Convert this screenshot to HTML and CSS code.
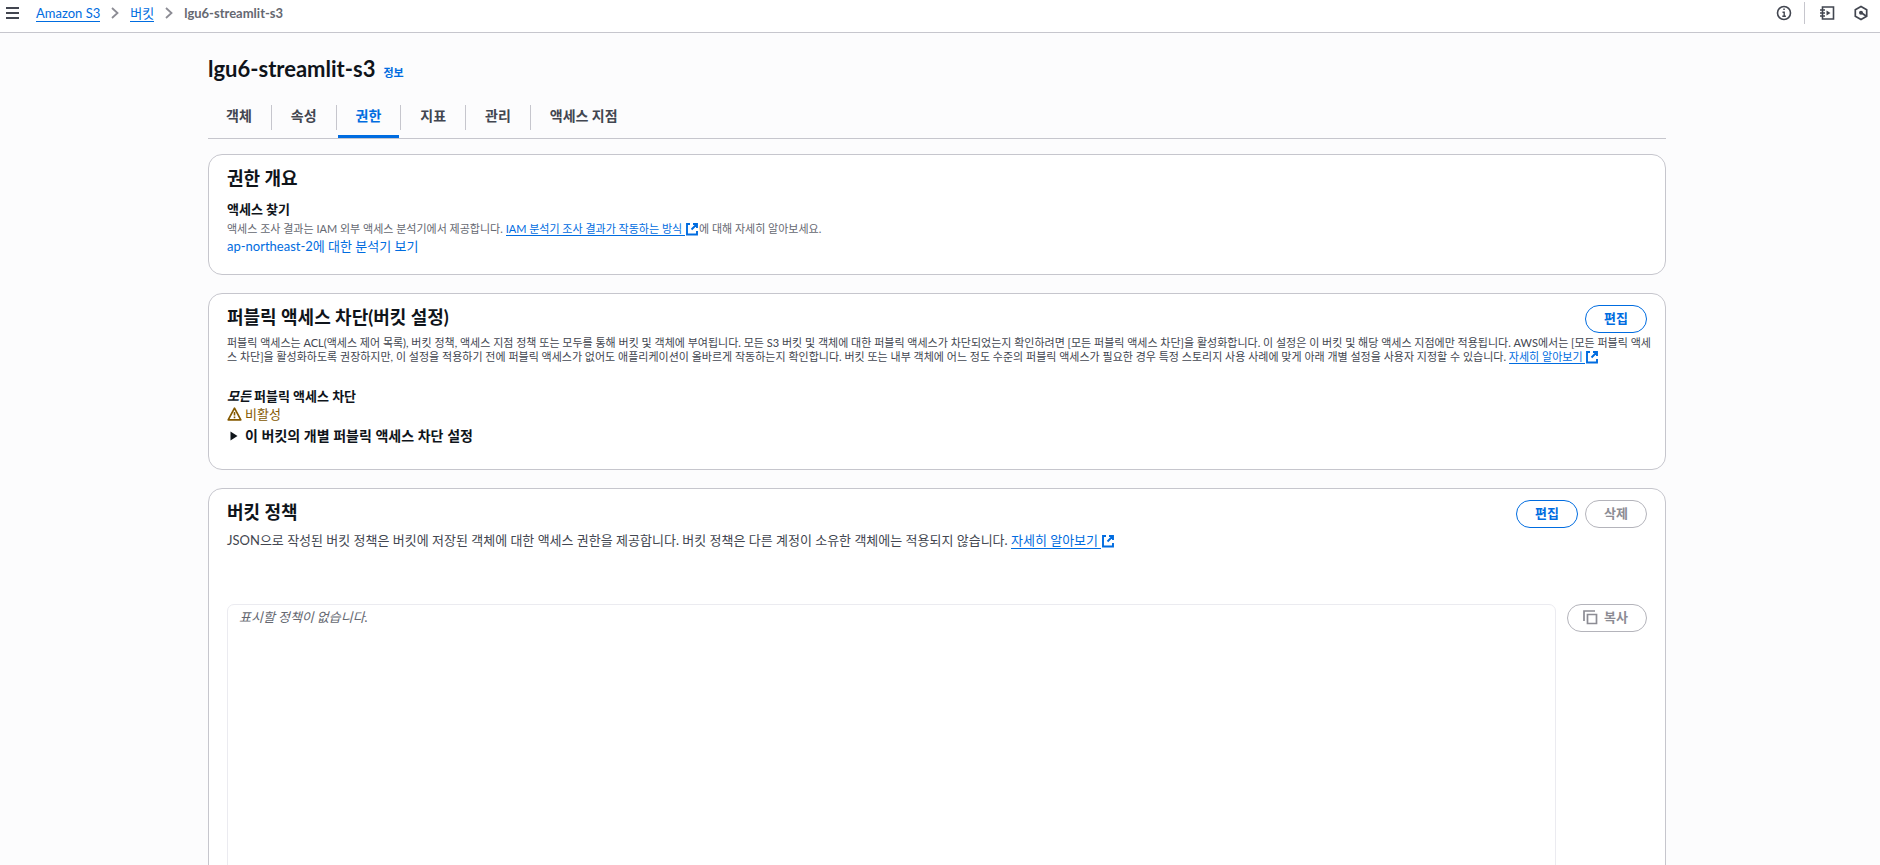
FILE: index.html
```html
<!DOCTYPE html>
<html lang="ko">
<head>
<meta charset="utf-8">
<title>lgu6-streamlit-s3 - S3 버킷</title>
<link rel="stylesheet" href="styles.css">
</head>
<body>
<svg class="sprite" aria-hidden="true">
  <symbol id="external" viewBox="0 0 14 14"><path d="M5 2H2v10.500h10V9M8 2h4v4M12 2L6.500 7.500" fill="none" stroke="currentColor" stroke-width="1.900"/></symbol>
  <symbol id="chevron" viewBox="0 0 8 12"><path d="M1 1l5.500 5L1 11" fill="none" stroke="currentColor" stroke-width="1.800"/></symbol>
</svg>
<header class="topbar">
  <button class="icon-button menu" aria-label="메뉴"><svg width="14" height="12" viewBox="0 0 14 12"><path d="M0 1h13M0 6h13M0 11h13" stroke="currentColor" stroke-width="2"/></svg></button>
  <nav class="breadcrumb" aria-label="이동 경로">
    <a href="#">Amazon S3</a>
    <svg class="chevron"><use href="#chevron"/></svg>
    <a href="#">버킷</a>
    <svg class="chevron"><use href="#chevron"/></svg>
    <span class="current">lgu6-streamlit-s3</span>
  </nav>
  <div class="tools">
    <button class="icon-button" aria-label="정보"><svg width="16" height="16" viewBox="0 0 16 16"><circle cx="8" cy="8" r="6.500" fill="none" stroke="currentColor" stroke-width="1.600"/><path d="M6.500 7.300h1.700V11M6.300 11.200h3.600M7.300 4.300h1.500" fill="none" stroke="currentColor" stroke-width="1.400"/></svg></button>
    <span class="divider"></span>
    <button class="icon-button" aria-label="자습서"><svg width="16" height="16" viewBox="0 0 16 16"><path d="M3.500 2h11v12h-11zM1 5h5M1 8h5M1 11h5" fill="none" stroke="currentColor" stroke-width="1.600"/><path d="M7.500 5.500v5l4-2.500z" fill="currentColor"/></svg></button>
    <button class="icon-button" aria-label="진단"><svg width="16" height="16" viewBox="0 0 16 16"><path d="M8 1.500l5.700 3.200v6.600L8 14.500l-5.700-3.200V4.700z" fill="none" stroke="currentColor" stroke-width="1.700"/><circle cx="8" cy="7.700" r="2" fill="currentColor"/><path d="M8 7.500l5 3.500" stroke="currentColor" stroke-width="1.800"/></svg></button>
  </div>
</header>
<main class="page">
  <div class="title-row"><h1>lgu6-streamlit-s3</h1><a class="info" href="#">정보</a></div>
  <nav class="tabs">
    <a href="#">객체</a><a href="#">속성</a><a href="#" class="active" aria-current="page">권한</a><a href="#">지표</a><a href="#">관리</a><a href="#">액세스 지점</a>
  </nav>

  <section class="card overview">
    <h2>권한 개요</h2>
    <h3>액세스 찾기</h3>
    <p class="small muted">액세스 조사 결과는 IAM 외부 액세스 분석기에서 제공합니다. <a href="#"><span class="link">IAM 분석기 조사 결과가 작동하는 방식 </span><svg class="external"><use href="#external"/></svg></a>에 대해 자세히 알아보세요.</p>
    <a class="plain" href="#">ap-northeast-2에 대한 분석기 보기</a>
  </section>

  <section class="card access">
    <div class="card-head"><h2>퍼블릭 액세스 차단(버킷 설정)</h2><div class="actions"><button class="button">편집</button></div></div>
    <p class="small">퍼블릭 액세스는 ACL(액세스 제어 목록), 버킷 정책, 액세스 지점 정책 또는 모두를 통해 버킷 및 객체에 부여됩니다. 모든 S3 버킷 및 객체에 대한 퍼블릭 액세스가 차단되었는지 확인하려면 [모든 퍼블릭 액세스 차단]을 활성화합니다. 이 설정은 이 버킷 및 해당 액세스 지점에만 적용됩니다. AWS에서는 [모든 퍼블릭 액세스 차단]을 활성화하도록 권장하지만, 이 설정을 적용하기 전에 퍼블릭 액세스가 없어도 애플리케이션이 올바르게 작동하는지 확인합니다. 버킷 또는 내부 객체에 어느 정도 수준의 퍼블릭 액세스가 필요한 경우 특정 스토리지 사용 사례에 맞게 아래 개별 설정을 사용자 지정할 수 있습니다. <a href="#"><span class="link">자세히 알아보기 </span><svg class="external"><use href="#external"/></svg></a></p>
    <h3><em>모든</em> 퍼블릭 액세스 차단</h3>
    <div class="status"><svg width="15" height="14" viewBox="0 0 15 14"><path d="M7.500 1.200L13.800 12.800H1.200z" fill="none" stroke="currentColor" stroke-width="1.700" stroke-linejoin="round"/><path d="M7.500 5v3.500M7.500 9.500v1.700" stroke="currentColor" stroke-width="1.600"/></svg>비활성</div>
    <button class="expander" aria-expanded="false"><svg width="8" height="10" viewBox="0 0 8 10"><path d="M.500.500L7.500 5 .500 9.500z" fill="currentColor"/></svg>이 버킷의 개별 퍼블릭 액세스 차단 설정</button>
  </section>

  <section class="card policy">
    <div class="card-head"><h2>버킷 정책</h2><div class="actions"><button class="button">편집</button><button class="button" disabled>삭제</button></div></div>
    <p class="description">JSON으로 작성된 버킷 정책은 버킷에 저장된 객체에 대한 액세스 권한을 제공합니다. 버킷 정책은 다른 계정이 소유한 객체에는 적용되지 않습니다. <a href="#"><span class="link">자세히 알아보기 </span><svg class="external"><use href="#external"/></svg></a></p>
    <div class="policy-body">
      <div class="policy-text">표시할 정책이 없습니다.</div>
      <button class="button copy" disabled><svg width="16" height="16" viewBox="0 0 16 16"><path d="M2 12V2h11M5.500 5.500h9v9h-9z" fill="none" stroke="currentColor" stroke-width="1.700"/></svg>복사</button>
    </div>
  </section>
</main>
</body>
</html>
```

FILE: styles.css
```css
* { box-sizing: border-box; }
html { height: 100%; overflow: hidden; }
body {
  margin: 0;
  height: 100%;
  overflow: hidden;
  background: #fcfcfd;
  color: #0f141a;
  font: 13px/18px Lato, "Noto Sans CJK KR", sans-serif;
}
h1, h2, h3, p { margin: 0; }
button { font: inherit; cursor: pointer; }
a { color: #006ce0; text-decoration: none; }
.sprite { display: none; }

.topbar {
  display: flex;
  align-items: center;
  height: 33px;
  padding: 0 11px 6px 6px;
  background: #fff;
  border-bottom: 1px solid #c6c6cd;
}
.icon-button {
  display: flex;
  padding: 0;
  border: 0;
  background: none;
  color: #424650;
}
.menu { margin-right: 16px; }
.breadcrumb { display: flex; align-items: center; gap: 11px; }
.breadcrumb a { line-height: 16px; border-bottom: 1px solid; }
.chevron { width: 8px; height: 12px; color: #8c8c94; }
.current { color: #656871; font-weight: 700; }
.tools { display: flex; align-items: center; gap: 18px; margin-left: auto; }
.divider { width: 1px; height: 22px; margin: 0 -4px 0 -6px; background: #c6c6cd; }

.page { padding: 22px 214px 0 208px; }
.title-row { display: flex; align-items: baseline; gap: 8px; }
h1 { font-size: 22px; line-height: 27px; font-weight: 700; }
.info { font-size: 11px; font-weight: 700; }
.tabs {
  display: flex;
  margin-top: 18px;
  border-bottom: 1px solid #c6c6cd;
}
.tabs a {
  position: relative;
  height: 38px;
  padding: 6px 18px;
  color: #424650;
  font-size: 14px;
  line-height: 20px;
  font-weight: 700;
  border-bottom: 3px solid transparent;
}
.tabs a + a { margin-left: 3px; }
.tabs a:not(:last-child)::after {
  content: "";
  position: absolute;
  top: 5px;
  right: -2px;
  width: 1px;
  height: 25px;
  background: #c6c6cd;
}
.tabs .active { color: #006ce0; border-color: #006ce0; }

.card {
  margin-top: 18px;
  padding: 11px 18px 23px;
  background: #fff;
  border: 1px solid #c6c6cd;
  border-radius: 14px;
}
.overview { margin-top: 15px; padding-bottom: 19px; }
h2 { font-size: 18px; line-height: 24px; font-weight: 700; }
h3 { font-size: 13px; line-height: 18px; font-weight: 700; }
.overview h3 { margin-top: 10px; }
.small { color: #424650; font-size: 11px; line-height: 14px; word-break: break-all; }
.muted { color: #656871; }
.overview .small { margin: 4px 0 1px; }
.link { border-bottom: 1px solid; }
.external { width: 14px; height: 14px; margin: -3px 0; vertical-align: 0; }
.plain { display: block; }
.card-head { display: flex; justify-content: space-between; height: 28px; }
.actions { display: flex; gap: 7px; }
.button {
  height: 28px;
  min-width: 62px;
  padding: 0 17px 2px;
  border: 1px solid #006ce0;
  border-radius: 14px;
  background: #fff;
  color: #006ce0;
  font-weight: 700;
  line-height: 18px;
}
.button:disabled { border-color: #b4b4bb; color: #8c8c94; cursor: default; }
.access .small { margin: 3px -8px 23px 0; }
.status { display: flex; align-items: center; gap: 3px; color: #855900; }
.expander {
  display: flex;
  align-items: center;
  gap: 7px;
  margin-top: 3px;
  padding: 0 0 0 3px;
  border: 0;
  background: none;
  color: #0f141a;
  font-family: "Open Sans", "Noto Sans CJK KR", sans-serif;
  font-size: 14px;
  line-height: 20px;
  font-weight: 700;
}
.description { margin-top: 3px; color: #424650; }
.policy-body { display: flex; align-items: flex-start; gap: 11px; margin-top: 55px; }
.policy-text {
  flex: 1;
  min-height: 450px;
  padding: 3px 11px;
  border: 1px solid #ebebf0;
  border-radius: 7px;
  color: #656871;
  font-style: italic;
}
.copy { display: flex; align-items: center; gap: 6px; padding: 0 18px 2px 14px; }
```
